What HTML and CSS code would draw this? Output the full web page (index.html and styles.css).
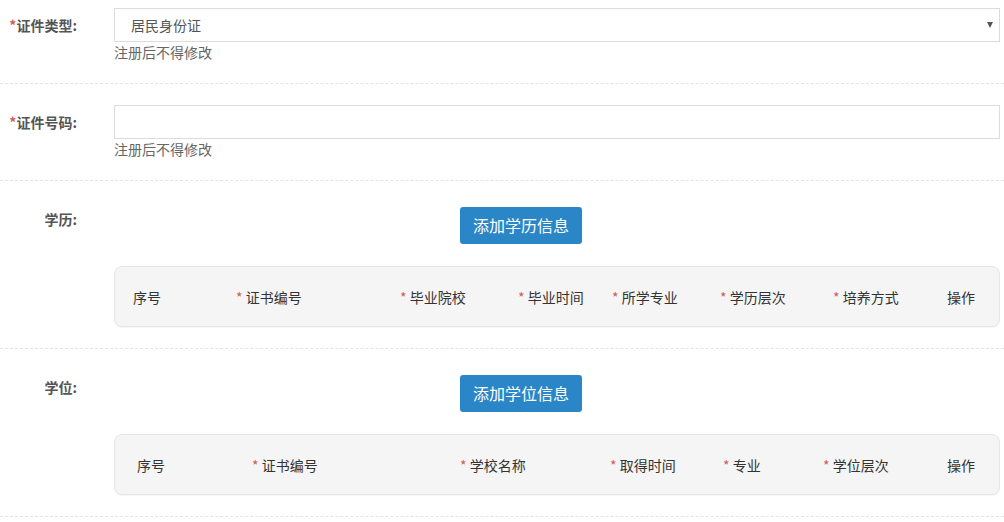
FILE: index.html
```html
<!DOCTYPE html>
<html lang="zh">
<head>
<meta charset="utf-8">
<link rel="stylesheet" href="styles.css">
</head>
<body>
<div class="form">
  <div class="row row-first">
    <div class="label"><span class="req">*</span>证件类型:</div>
    <div class="field">
      <div class="select">
        <span>居民身份证</span>
        <span class="arrow"></span>
      </div>
      <div class="hint">注册后不得修改</div>
    </div>
  </div>
  <div class="row">
    <div class="label"><span class="req">*</span>证件号码:</div>
    <div class="field">
      <div class="input"></div>
      <div class="hint">注册后不得修改</div>
    </div>
  </div>
  <div class="row">
    <div class="label">学历:</div>
    <div class="field">
      <div class="btn">添加学历信息</div>
      <div class="thead cols-edu">
        <div>序号</div>
        <div><span class="req">*</span> 证书编号</div>
        <div><span class="req">*</span> 毕业院校</div>
        <div><span class="req">*</span> 毕业时间</div>
        <div><span class="req">*</span> 所学专业</div>
        <div><span class="req">*</span> 学历层次</div>
        <div><span class="req">*</span> 培养方式</div>
        <div>操作</div>
      </div>
    </div>
  </div>
  <div class="row">
    <div class="label">学位:</div>
    <div class="field">
      <div class="btn">添加学位信息</div>
      <div class="thead cols-deg">
        <div>序号</div>
        <div><span class="req">*</span> 证书编号</div>
        <div><span class="req">*</span> 学校名称</div>
        <div><span class="req">*</span> 取得时间</div>
        <div><span class="req">*</span> 专业</div>
        <div><span class="req">*</span> 学位层次</div>
        <div>操作</div>
      </div>
    </div>
  </div>
</div>
</body>
</html>
```
FILE: styles.css
```css
html, body {
  margin: 0;
  padding: 0;
  background: #fff;
}
body {
  font-family: "Noto Sans CJK SC", "Liberation Sans", sans-serif;
  font-size: 14px;
  color: #333;
}
.form {
  width: 1004px;
}
.row {
  display: flex;
  gap: 8px;
  padding: 21px 4px 21px 0;
  border-bottom: 1px dashed #e3e3e3;
}
.row-first {
  padding-top: 8px;
}
.label {
  width: 106px;
  flex: none;
  text-align: right;
  padding-right: 29px;
  box-sizing: border-box;
  line-height: 34px;
  height: 34px;
  font-weight: bold;
  color: #555;
  font-size: 14px;
  white-space: nowrap;
}
.req {
  color: #cf5a5a;
  font-weight: normal;
}
.label .req {
  font-weight: bold;
}
.field {
  flex: 1;
  min-width: 0;
}
.select, .input {
  height: 34px;
  box-sizing: border-box;
  border: 1px solid #dcdcdc;
  background: #fff;
}
.select {
  display: flex;
  align-items: center;
  justify-content: space-between;
  padding: 0 6px 0 16px;
  color: #555;
}
.arrow {
  width: 0;
  height: 0;
  border-left: 3.5px solid transparent;
  border-right: 3.5px solid transparent;
  border-top: 6px solid #555;
}
.hint {
  line-height: 20px;
  color: #666;
}
.btn {
  display: inline-block;
  margin: 5px 0 0 346px;
  height: 37px;
  line-height: 37px;
  padding: 0 13px;
  background: #2a86c6;
  color: #fff;
  font-size: 16px;
  border-radius: 3px;
}
.thead {
  display: grid;
  margin-top: 22px;
  height: 61px;
  box-sizing: border-box;
  align-items: center;
  background: #f5f5f5;
  border: 1px solid #e6e6e6;
  border-radius: 8px;
  box-shadow: 0 1px 1px rgba(0,0,0,0.04);
  color: #333;
  white-space: nowrap;
}
.cols-edu {
  padding-left: 18px;
  grid-template-columns: 103px 164px 118px 94px 108px 113px 114px auto;
}
.cols-deg {
  padding-left: 22px;
  grid-template-columns: 115px 208px 150px 113px 100px 124px auto;
}
```
